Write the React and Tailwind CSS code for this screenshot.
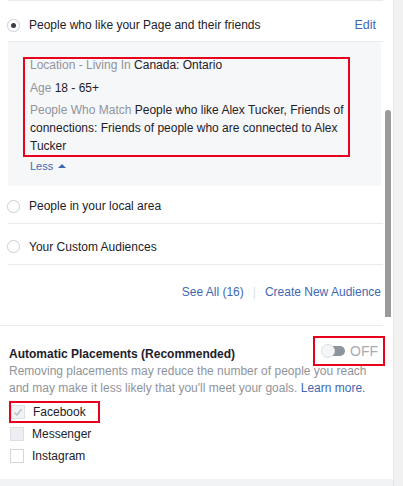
import React from "react";

function Radio({ checked }) {
  return (
    <span className="relative flex h-[13px] w-[13px] shrink-0 items-center justify-center rounded-full border border-[#d3d6db] bg-white shadow-[0_0_1px_rgba(0,0,0,0.15)]">
      {checked && <span className="h-[5px] w-[5px] rounded-full bg-[#3c3f44]" />}
    </span>
  );
}

function Checkbox({ state }) {
  if (state === "checked") {
    return (
      <span className="flex h-[14px] w-[14px] shrink-0 items-center justify-center border border-[#dddfe2] bg-[#f2f3f5]">
        <svg width="10" height="10" viewBox="0 0 10 10">
          <path d="M1.5 5.5 L4 8 L8.5 2" fill="none" stroke="#bec3c9" strokeWidth="1.6" />
        </svg>
      </span>
    );
  }
  if (state === "disabled") {
    return <span className="h-[14px] w-[14px] shrink-0 border border-[#dddfe2] bg-[#eceef1]" />;
  }
  return <span className="h-[14px] w-[14px] shrink-0 border border-[#d3d6db] bg-white" />;
}

export default function App() {
  return (
    <div className="flex h-[486px] w-[403px] overflow-hidden bg-white text-[12px] text-[#1d2129]" style={{ fontFamily: '"Liberation Sans", Arial, sans-serif' }}>
      <div className="relative flex w-[393px] shrink-0 flex-col">
        {/* scrollbar thumb */}
        <div className="absolute left-[385px] top-[110px] h-[207px] w-[6px] rounded-t-[3px] bg-[#9a9a9a]" />

        <div className="pl-[8px] pr-[10px]">
          <div className="border-t border-[#e9ebee]" />
          <div className="-ml-[1px] flex h-[40px] items-center pr-[7px] pt-[8px]">
            <Radio checked />
            <span className="ml-[9px]">People who like your Page and their friends</span>
            <span className="ml-auto text-[12.5px] text-[#4267b2]">Edit</span>
          </div>
          <div className="border-t border-[#e9ebee]" />
          <div className="mr-[2px] bg-[#f6f7f9] pb-[12px] pl-[15px] pt-[15px]">
            <div className="w-[327px] border-2 border-[#e8001c] pl-[5px] pr-[1px]">
              <div className="-mt-[3px] leading-[18px]">
                <span className="text-[#90949c]">Location - Living In </span>Canada: Ontario
              </div>
              <div className="mt-[5px] leading-[18px]">
                <span className="text-[#90949c]">Age </span>18 - 65+
              </div>
              <div className="mt-[4px] leading-[18px]">
                <span className="text-[#90949c]">People Who Match </span>People who like Alex Tucker, Friends of connections: Friends of people who are connected to Alex Tucker
              </div>
            </div>
            <div className="mt-[1px] flex items-center pl-[7px] text-[11px] leading-[16px] text-[#4267b2]">
              Less
              <svg className="ml-[5px]" width="8" height="6" viewBox="0 0 8 6">
                <path d="M0 5 L4 1 L8 5 Z" fill="#4267b2" />
              </svg>
            </div>
          </div>
          <div className="-ml-[1px] flex h-[37px] items-center pt-[3px]">
            <Radio />
            <span className="ml-[9px]">People in your local area</span>
          </div>
          <div className="border-t border-[#e9ebee]" />
          <div className="-ml-[1px] flex h-[40px] items-center pt-[5px]">
            <Radio />
            <span className="ml-[9px]">Your Custom Audiences</span>
          </div>
          <div className="border-t border-[#e9ebee]" />
          <div className="flex h-[60px] items-center justify-end pb-[6px] pr-[2px] text-[#4267b2]">
            <span>See All (16)</span>
            <span className="mx-[9px] text-[#dddfe2]">|</span>
            <span>Create New Audience</span>
          </div>
        </div>

        <div className="mr-[10px] border-t border-[#e9ebee]" />
        <div className="pl-[9px] pr-[10px]">
          <div className="mt-[10px] flex items-center">
            <span className="mt-[5px] font-bold">Automatic Placements (Recommended)</span>
            <div className="ml-auto mr-[-2px] flex h-[30px] w-[72px] items-center border-2 border-[#e8001c] pl-[6px]">
              <div className="relative h-[12px] w-[24px]">
                <div className="absolute left-[2px] top-[1px] h-[10px] w-[22px] rounded-full bg-[#8d949e]" />
                <div className="absolute left-0 top-[-1px] h-[14px] w-[14px] rounded-full border border-[#dddfe2] bg-[#f5f6f7]" />
              </div>
              <span className="ml-[5px] text-[14px] text-[#a8acb2]">OFF</span>
            </div>
          </div>
          <div className="-mt-[3px] leading-[17px] text-[#90949c]">
            Removing placements may reduce the number of people you reach and may make it less likely that you'll meet your goals. <span className="text-[#4267b2]">Learn more.</span>
          </div>
          <div className="mt-[4px] flex h-[22px] w-[91px] items-center border-2 border-[#e8001c]">
            <Checkbox state="checked" />
            <span className="ml-[8px]">Facebook</span>
          </div>
          <div className="flex h-[22px] items-center pl-[1px]">
            <Checkbox state="disabled" />
            <span className="ml-[8px]">Messenger</span>
          </div>
          <div className="flex h-[22px] items-center pl-[1px]">
            <Checkbox />
            <span className="ml-[8px]">Instagram</span>
          </div>
        </div>
        <div className="mt-auto h-[7px] bg-[#f2f3f5]" />
      </div>
      <div className="w-[10px] shrink-0 border-l border-[#e6e6e6] bg-[#f1f1f1]" />
    </div>
  );
}
